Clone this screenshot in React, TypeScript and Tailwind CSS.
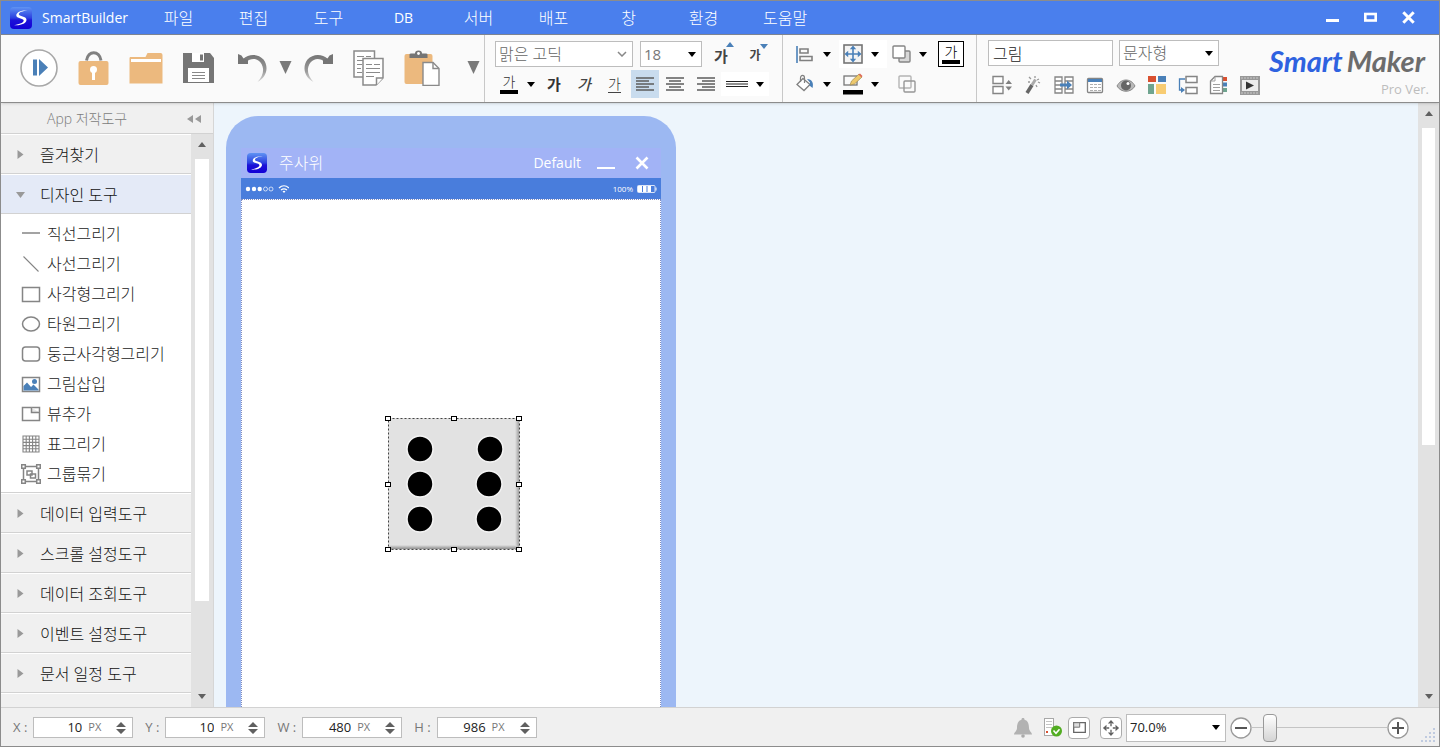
import React from 'react';
import clsx from 'clsx';

const MENUS = ['파일', '편집', '도구', 'DB', '서버', '배포', '창', '환경', '도움말'];

function SLogo({ className }: { className: string }) {
  return (
    <svg viewBox="0 0 22 22" className={className} aria-hidden="true">
      <defs>
        <linearGradient id="logoFill" x1="0" y1="0" x2="0" y2="1">
          <stop offset="0" stopColor="#5f93f3" />
          <stop offset="0.5" stopColor="#2b3fe0" />
          <stop offset="0.6" stopColor="#1c12d8" />
          <stop offset="1" stopColor="#1200d6" />
        </linearGradient>
      </defs>
      <rect width="22" height="22" rx="4" fill="url(#logoFill)" />
      <path d="M17.5 3.6C12 3 6.300 5 6.300 8.400c0 3 7.400 2.600 7.400 5.200 0 2-4 3.900-9.700 4.600 6.800.7 12.500-1.800 12.500-5.400 0-3.800-7.700-3.300-7.700-5.500 0-1.800 3.800-3.200 8.700-3.700z" fill="#fff" />
    </svg>
  );
}

function Caret({ className }: { className?: string }) {
  return (
    <svg width="8" height="5" viewBox="0 0 8 5" className={clsx('shrink-0', className)} aria-hidden="true">
      <path d="M0 0h8L4 5z" fill="currentColor" />
    </svg>
  );
}

function BigCaret() {
  return (
    <svg width="13" height="13" viewBox="0 0 13 13" className="shrink-0" aria-hidden="true">
      <path d="M0.500 0h12L6.500 13z" fill="#7a7a7a" />
    </svg>
  );
}

function ToolButton({ label, className, children }: { label: string; className?: string; children: React.ReactNode }) {
  return (
    <button type="button" aria-label={label} className={clsx('flex shrink-0 items-center justify-center', className)}>
      {children}
    </button>
  );
}

function DropButton({ label, className, children }: { label: string; className?: string; children: React.ReactNode }) {
  return (
    <button type="button" aria-label={label} className={clsx('flex h-7 w-12 shrink-0 items-center gap-2 pl-1', className)}>
      {children}
      <Caret className="text-black" />
    </button>
  );
}

function SelectBox({ label, value, width, height, text, thin }: { label: string; value: string; width: string; height: string; text: string; thin?: boolean }) {
  return (
    <div className={clsx('relative shrink-0', width, height)}>
      <select aria-label={label} className={clsx('size-full appearance-none border border-[#bdbdbd] bg-white pl-[3px] outline-none', text)}>
        <option>{value}</option>
      </select>
      {thin ? (
        <svg width="10" height="6" viewBox="0 0 10 6" className="pointer-events-none absolute top-2.5 right-1.5" aria-hidden="true">
          <path d="M1 1l4 4 4-4" fill="none" stroke="#888" strokeWidth="1.500" />
        </svg>
      ) : (
        <Caret className="pointer-events-none absolute inset-y-0 right-1.5 my-auto text-black" />
      )}
    </div>
  );
}

function TitleBar() {
  return (
    <header className="flex h-[34px] shrink-0 items-center border-b border-[#7f8794] bg-[#4a7fed] pl-[9px] text-white">
      <SLogo className="size-[22px]" />
      <h1 className="ml-2.5 w-[99px] text-sm font-normal">SmartBuilder</h1>
      <nav className="flex flex-1">
        {MENUS.map((m) => (
          <button key={m} type="button" className={clsx('min-w-[75px] px-[22px] whitespace-nowrap', m === 'DB' ? 'text-sm font-normal' : 'text-base')}>{m}</button>
        ))}
      </nav>
      <div className="mr-6 flex items-center gap-[25px]">
        <ToolButton label="최소화">
          <svg width="13" height="14" viewBox="0 0 13 14"><path d="M0 9.500h13" stroke="#fff" strokeWidth="3" /></svg>
        </ToolButton>
        <ToolButton label="최대화">
          <svg width="13" height="14" viewBox="0 0 13 14"><rect x="1.300" y="3" width="10.400" height="6.500" fill="none" stroke="#fff" strokeWidth="2.600" /></svg>
        </ToolButton>
        <ToolButton label="닫기">
          <svg width="13" height="13" viewBox="0 0 13 13"><path d="M1.300 1.300l10.400 10.400M11.700 1.300L1.300 11.700" stroke="#fff" strokeWidth="3" /></svg>
        </ToolButton>
      </div>
    </header>
  );
}

function UndoArrow({ flip }: { flip?: boolean }) {
  const id = flip ? 'redoFade' : 'undoFade';
  return (
    <svg width="30" height="30" viewBox="0 0 30 30" aria-hidden="true">
      <defs>
        <linearGradient id={id} x1="0" y1="0" x2="0" y2="1">
          <stop offset="0" stopColor="#757575" />
          <stop offset="0.600" stopColor="#9a9a9a" />
          <stop offset="1" stopColor="#d8d8d8" />
        </linearGradient>
      </defs>
      <g transform={flip ? 'translate(30 0) scale(-1 1)' : undefined}>
        <path d="M5 6C11 .500 20 .500 25.500 6.500 31 13.500 29 24 19.500 29 25.500 23 27 15.500 22.500 9.500 18.500 4.500 12.500 5 8 9z" fill={`url(#${id})`} />
        <path d="M0 1l3.500 1.500 2 3 4.500 1V11H0z" fill="#757575" />
      </g>
    </svg>
  );
}

function FileGroup() {
  return (
    <div className="flex w-[484px] shrink-0 items-center gap-5 border-r border-[#c8c8c8] pr-1 pb-0.5 pl-[19px]">
      <ToolButton label="실행">
        <svg width="38" height="38" viewBox="0 0 38 38">
          <circle cx="19" cy="19" r="18" fill="#fff" stroke="#a8a8a8" strokeWidth="1.600" />
          <path d="M13 10.500h4v16h-4zM19 10l9 8.500-9 8.500z" fill="#4a80b8" />
        </svg>
      </ToolButton>
      <ToolButton label="잠금">
        <svg width="31" height="34" viewBox="0 0 31 34">
          <path d="M8.500 9.500c1.500-10.500 13-10.500 14.500 0" fill="none" stroke="#808080" strokeWidth="3" />
          <rect x="0.500" y="10" width="30" height="24" rx="2" fill="#ecb97e" />
          <circle cx="15.500" cy="18.500" r="3.500" fill="#fff" />
          <path d="M14 20h3v9h-3z" fill="#fff" />
        </svg>
      </ToolButton>
      <ToolButton label="열기">
        <svg width="34" height="32" viewBox="0 0 34 32">
          <path d="M1 5h15.500l2-4h13q2 0 2 2v28.500H.500V6z" fill="#ecb97e" />
          <path d="M2 7h30v3H2z" fill="#fff" />
        </svg>
      </ToolButton>
      <ToolButton label="저장">
        <svg width="31" height="30" viewBox="0 0 31 30">
          <path d="M0 0h27l4 5v25H0z" fill="#757575" />
          <path d="M9 0h12v9H9zM5 15h21v14H5z" fill="#fff" />
          <path d="M17 1.500h3v6h-3z" fill="#757575" />
          <path d="M9 19.500h13M9 22.500h13M9 25.500h13" stroke="#888" />
        </svg>
      </ToolButton>
      <div className="ml-1 flex items-center gap-[11px]">
        <ToolButton label="실행 취소"><UndoArrow /></ToolButton>
        <ToolButton label="취소 목록"><BigCaret /></ToolButton>
        <ToolButton label="다시 실행"><UndoArrow flip /></ToolButton>
      </div>
      <ToolButton label="복사">
        <svg width="31" height="36" viewBox="0 0 31 36" stroke="#8a8a8a" fill="#fff">
          <path d="M1 1h20.500v26H1z" strokeWidth="1.500" />
          <path d="M4 6.500h7M4 10.500h6M4 14.500h5M4 18.500h4M4 22.500h5M13 6.500h5" />
          <path d="M10 8.500h20V28l-7 7H10z" strokeWidth="1.500" />
          <path d="M30 28h-6.500v7" strokeWidth="1.500" />
          <path d="M13 14.500h6M13 18.500h14M13 22.500h14M13 26.500h8M21 14.500h6" />
        </svg>
      </ToolButton>
      <ToolButton label="붙여넣기">
        <svg width="36" height="36" viewBox="0 0 36 36">
          <rect x="0.500" y="4" width="28" height="30" rx="2" fill="#ecb97e" />
          <path d="M5.500 8V4.500Q5.500 3.500 7 3.500h4Q11 .500 14.500.500T18 3.500h4q1.500 0 1.500 1V8z" fill="#757575" />
          <circle cx="14.500" cy="3.500" r="1.400" fill="#fff" />
          <path d="M19 12.500h10l6 6v17H19z" fill="#fff" stroke="#8a8a8a" strokeWidth="1.400" />
          <path d="M29 12.500v6h6" fill="none" stroke="#8a8a8a" strokeWidth="1.400" />
        </svg>
      </ToolButton>
      <ToolButton label="더보기" className="ml-auto"><BigCaret /></ToolButton>
    </div>
  );
}

const ALIGN_LINES: Record<string, string> = {
  left: 'M0 1h18M0 4h13M0 7h18M0 10h13M0 13h18',
  center: 'M0 1h18M3 4h12M0 7h18M3 10h12M0 13h18',
  right: 'M0 1h18M5 4h13M0 7h18M5 10h13M0 13h18',
};

function AlignIcon({ kind }: { kind: string }) {
  return (
    <svg width="18" height="14" viewBox="0 0 18 14" aria-hidden="true">
      <path d={ALIGN_LINES[kind]} stroke="#5c5c5c" strokeWidth="1.600" />
    </svg>
  );
}

function FontGroup() {
  return (
    <div className="flex w-[298px] shrink-0 flex-col gap-0.5 border-r border-[#c8c8c8] pt-[5px] pl-2.5">
      <div className="flex items-center">
        <SelectBox label="글꼴" value="맑은 고딕" width="w-[138px]" height="h-[26px]" text="text-base text-[#666]" thin />
        <div className="w-[7px]" />
        <SelectBox label="글자 크기" value="18" width="w-[62px]" height="h-[26px]" text="text-[15px] font-normal text-[#777]" />
        <ToolButton label="글자 크게" className="relative ml-1 h-7 w-[30px] pt-1 text-[15px] font-bold text-[#444]">
          가
          <Caret className="absolute top-0.5 right-0.5 rotate-180 text-[#4a80b8]" />
        </ToolButton>
        <ToolButton label="글자 작게" className="relative ml-1 h-7 w-[30px] pt-1 text-xs font-bold text-[#444]">
          가
          <Caret className="absolute top-1 right-0.5 text-[#4a80b8]" />
        </ToolButton>
      </div>
      <div className="flex items-center">
        <DropButton label="글자색" className="mr-[-4px]">
          <span className="flex w-5 flex-col items-center text-[14px] leading-4 text-[#333]">
            가
            <span className="h-1 w-[18px] bg-black" />
          </span>
        </DropButton>
        <ToolButton label="굵게" className="h-7 w-[30px] text-[15px] font-bold text-[#333]">가</ToolButton>
        <ToolButton label="기울임" className="h-7 w-[30px] text-[15px] font-medium text-[#444] italic">가</ToolButton>
        <ToolButton label="밑줄" className="mr-px h-7 w-[31px] text-[#333]">
          <span className="border-b border-[#444] text-[14px] leading-4">가</span>
        </ToolButton>
        <ToolButton label="왼쪽 맞춤" className="h-7 w-7 bg-[#c9dcee]"><AlignIcon kind="left" /></ToolButton>
        <ToolButton label="가운데 맞춤" className="h-7 w-[31px]"><AlignIcon kind="center" /></ToolButton>
        <ToolButton label="오른쪽 맞춤" className="h-7 w-[31px]"><AlignIcon kind="right" /></ToolButton>
        <ToolButton label="선 종류" className="h-6 w-12 gap-2 bg-white">
          <svg width="22" height="6" viewBox="0 0 22 6"><path d="M0 .500h22M0 3h22M0 5.500h22" stroke="#222" /></svg>
          <Caret className="text-black" />
        </ToolButton>
      </div>
    </div>
  );
}

function FitArrows({ color }: { color: string }) {
  return (
    <>
      <path d="M10 5v10M5 10h10" stroke={color} strokeWidth="1.600" />
      <path d="M10 1.500l3.200 3.700H6.800zM10 18.500l3.200-3.700H6.800zM1.500 10l3.700-3.200v6.400zM18.500 10l-3.700-3.200v6.400z" fill={color} />
    </>
  );
}

function ShapeGroup() {
  return (
    <div className="flex w-[194px] shrink-0 flex-col gap-0.5 border-r border-[#c8c8c8] pt-[5px] pl-2">
      <div className="flex items-center">
        <DropButton label="정렬">
          <svg width="20" height="20" viewBox="0 0 20 20" fill="none" stroke="#808080" strokeWidth="1.600">
            <path d="M2 2v17" stroke="#4a80b8" />
            <path d="M5 5h8v4H5zM5 12.500h12v4H5z" />
          </svg>
        </DropButton>
        <DropButton label="크기 맞춤" className="bg-white">
          <svg width="20" height="20" viewBox="0 0 20 20">
            <rect x="1" y="1" width="18" height="18" fill="#f4f4f4" stroke="#757575" strokeWidth="1.600" />
            <FitArrows color="#4a80b8" />
          </svg>
        </DropButton>
        <DropButton label="순서">
          <svg width="20" height="20" viewBox="0 0 20 20" stroke="#858585" strokeWidth="1.400">
            <rect x="8" y="7" width="11" height="11" rx="1" fill="#d8d8d8" />
            <rect x="2" y="2" width="12" height="12" rx="1" fill="#fff" />
          </svg>
        </DropButton>
        <ToolButton label="배경색" className="ml-[3px] size-[26px] flex-col border border-black bg-white text-[14px] leading-4">
          가
          <span className="h-1 w-[18px] bg-black" />
        </ToolButton>
      </div>
      <div className="flex items-center">
        <DropButton label="채우기">
          <svg width="20" height="20" viewBox="0 0 20 20">
            <path d="M8 4.500l7 6-6 6-7-6z" fill="#fff" stroke="#808080" strokeWidth="1.300" />
            <path d="M5.500 8V4c0-3.500 4-3.500 4 0v5" fill="none" stroke="#808080" strokeWidth="1.200" />
            <path d="M12 5c5 0 7 4 5.500 9l-3-2.500.500-3z" fill="#4a80b8" />
          </svg>
        </DropButton>
        <DropButton label="선 색">
          <svg width="20" height="22" viewBox="0 0 20 22">
            <rect x="1" y="3" width="13" height="9" fill="none" stroke="#777" strokeWidth="1.300" />
            <path d="M7 12l1.500-4L16 1l3 3-7.500 7z" fill="#eec96c" stroke="#a08a50" strokeWidth="0.700" />
            <path d="M15.500 1.500L17 .500 19.500 3 18.500 4.500z" fill="#dc6a58" />
            <path d="M0 17h20v4.500H0z" fill="#000" />
          </svg>
        </DropButton>
        <ToolButton label="그룹" className="h-7 w-10">
          <svg width="20" height="20" viewBox="0 0 20 20" fill="none" stroke="#b4b4b4" strokeWidth="1.400">
            <rect x="2" y="2" width="12" height="12" rx="1" />
            <rect x="7" y="7" width="11" height="11" rx="1" stroke="#969696" />
          </svg>
        </ToolButton>
      </div>
    </div>
  );
}

const OBJECT_TOOLS: { label: string; art: React.ReactNode }[] = [
  {
    label: '배치',
    art: (
      <>
        <path d="M1 1.500h10v7H1zM1 11.500h10v7H1z" fill="#fff" stroke="#858585" strokeWidth="1.400" />
        <path d="M13.500 9l3.200-4L20 9zM13.500 11.500l3.200 4 3.300-4z" fill="#808080" />
      </>
    ),
  },
  {
    label: '마법봉',
    art: (
      <>
        <path d="M4 18l5-8" stroke="#666" strokeWidth="3.500" />
        <path d="M9 10l3.500-5.500" stroke="#aaa" strokeWidth="3" />
        <path d="M6 2l2 2M12 1v2M16 4l-2 1M17 8l-2-1M14 12l-1-2M5 7l2 0" stroke="#999" strokeWidth="1.300" />
      </>
    ),
  },
  {
    label: '데이터 연결',
    art: (
      <>
        <path d="M1 2h7v16H1zM11 2h8v16h-8zM1 6h7M1 10h7M1 14h7M11 6h8M11 14h8" fill="#fff" stroke="#858585" strokeWidth="1.300" />
        <path d="M6 8.500h7V5.500l5 4.500-5 4.500v-3H6z" fill="#4a80b8" />
      </>
    ),
  },
  {
    label: '표',
    art: (
      <>
        <rect x="2.500" y="3.500" width="15" height="14" rx="1" fill="#fff" stroke="#858585" strokeWidth="1.300" />
        <path d="M3 4h14v3H3z" fill="#4a80b8" />
        <path d="M5 9.500h3M5 12.500h3M5 15.500h3M9 9.500h3M9 12.500h3M9 15.500h3M13 9.500h3M13 12.500h3M13 15.500h3" stroke="#b0b0b0" />
      </>
    ),
  },
  {
    label: '보기',
    art: (
      <>
        <path d="M1 11c4-8 14-8 18 0-4 7-14 7-18 0z" fill="#b9b9b9" stroke="#888" />
        <circle cx="10" cy="10.500" r="5" fill="#666" />
        <circle cx="12" cy="8.500" r="1.500" fill="#fff" />
      </>
    ),
  },
  {
    label: '색상',
    art: (
      <>
        <path d="M1 1h8v6H1z" fill="#d95030" />
        <path d="M11 1h8v6h-8z" fill="#4a80b8" />
        <path d="M1 9h6v10H1z" fill="#6fa48f" />
        <path d="M9 9h10v10H9z" fill="#f8cc72" />
      </>
    ),
  },
  {
    label: '흐름',
    art: (
      <>
        <path d="M8 1.500h11v6H8zM8 12.500h11v6H8z" fill="#fff" stroke="#858585" strokeWidth="1.500" />
        <path d="M7 4H1.500v11H5" fill="none" stroke="#4a80b8" strokeWidth="1.300" />
        <path d="M3 12l4 3-4 3z" fill="#4a80b8" />
      </>
    ),
  },
  {
    label: '문서',
    art: (
      <>
        <path d="M14 2h4v4h-4z" fill="#d95030" />
        <path d="M14 7.500h4v4h-4z" fill="#4a80b8" />
        <path d="M14 13h4v4h-4z" fill="#6fa48f" />
        <path d="M6 1.500h7.500v17H1.500V6z" fill="#fff" stroke="#858585" strokeWidth="1.300" />
        <path d="M6 1.500V6H1.500M4 9.500h7M4 12.500h7M4 15.500h7" fill="none" stroke="#a0a0a0" />
      </>
    ),
  },
  {
    label: '미리보기',
    art: (
      <>
        <rect x="0" y="1" width="20" height="19" fill="#989898" />
        <rect x="2" y="5" width="16" height="11" fill="#ececec" />
        <path d="M6 6.500l8 4-8 4z" fill="#333" />
        <path d="M1 3h18M1 18h18" stroke="#c8c8c8" strokeDasharray="2 1" />
      </>
    ),
  },
];

function ObjectGroup() {
  return (
    <div className="flex min-w-0 flex-1 justify-between">
      <div className="flex flex-col gap-[5px] pt-[5px] pl-[9px]">
        <div className="flex items-center gap-1.5 pl-0.5">
          <input aria-label="이름" defaultValue="그림" className="h-[26px] w-[125px] border border-[#bdbdbd] bg-white px-1 text-base text-[#222] outline-none" />
          <SelectBox label="형식" value="문자형" width="w-[100px]" height="h-[26px]" text="text-base text-[#666]" />
        </div>
        <div className="flex">
          {OBJECT_TOOLS.map((t) => (
            <ToolButton key={t.label} label={t.label} className="h-7 w-[31px]">
              <svg width="20" height="20" viewBox="0 0 20 20">{t.art}</svg>
            </ToolButton>
          ))}
        </div>
      </div>
      <div className="mr-2.5 flex flex-col items-end pt-1.5">
        <p className="flex items-baseline gap-1 pr-1 font-['Lato',sans-serif] text-[29px] leading-10 font-bold italic">
          <span className="text-[#2e62e0]">Smart</span>
          <span className="text-[#6c6c6c]">Maker</span>
        </p>
        <p className="text-[13px] leading-4 font-normal text-[#bdbdbd]">Pro Ver.</p>
      </div>
    </div>
  );
}

const DESIGN_TOOLS: { name: string; art: React.ReactNode }[] = [
  { name: '직선그리기', art: <path d="M1 9h18" /> },
  { name: '사선그리기', art: <path d="M2.500 2.500l15 15" strokeWidth="1.100" /> },
  { name: '사각형그리기', art: <rect x="1.500" y="3.500" width="17" height="14" /> },
  { name: '타원그리기', art: <ellipse cx="10" cy="10" rx="8.500" ry="7" /> },
  { name: '둥근사각형그리기', art: <rect x="1.500" y="3" width="17" height="14" rx="3" /> },
  {
    name: '그림삽입',
    art: (
      <>
        <rect x="1.500" y="3.500" width="17" height="14" />
        <path d="M2.500 16.500V12L6 8.500l4 4.500 2.500-2.500 5 5v1z" fill="#4a80b8" stroke="none" />
        <circle cx="13.500" cy="7.500" r="2.500" fill="#4a80b8" stroke="none" />
      </>
    ),
  },
  {
    name: '뷰추가',
    art: (
      <>
        <rect x="1.500" y="3.500" width="17" height="13" />
        <path d="M10.500 3.500v5h8" fill="#e8e8e8" />
      </>
    ),
  },
  {
    name: '표그리기',
    art: <path d="M2 2h16v16H2zM5.200 2v16M8.400 2v16M11.600 2v16M14.800 2v16M2 5.200h16M2 8.400h16M2 11.600h16M2 14.800h16" strokeWidth="1.100" />,
  },
  {
    name: '그룹묶기',
    art: (
      <>
        <path d="M2.500 2.500h15v15h-15z" />
        <path d="M.700.700h3.600v3.600H.700zM15.700.700h3.600v3.600h-3.600zM.700 15.700h3.600v3.600H.700zM15.700 15.700h3.600v3.600h-3.600z" fill="#fff" />
        <path d="M6 7h5v4H6zM9.500 10h5v4h-5z" />
      </>
    ),
  },
];

const SECTIONS = ['데이터 입력도구', '스크롤 설정도구', '데이터 조회도구', '이벤트 설정도구', '문서 일정 도구'];

function SectionHeader({ title, open }: { title: string; open?: boolean }) {
  return (
    <button
      type="button"
      className={clsx(
        'flex h-10 w-full shrink-0 items-center border-t border-b border-t-white border-b-[#d2d2d2] pt-px pl-[15px] text-base text-[#111]',
        open ? 'bg-[#e4eaf7]' : 'bg-[#f0f0f0]'
      )}
    >
      <svg width="9" height="9" viewBox="0 0 9 9" className="mr-[15px]" aria-hidden="true">
        <path d={open ? 'M0 2h9L4.500 8z' : 'M1.500 0L7.500 4.500l-6 4.500z'} fill="#999" />
      </svg>
      {title}
    </button>
  );
}

function ScrollBar({ className, thumb }: { className: string; thumb: string }) {
  return (
    <div className={clsx('flex shrink-0 flex-col items-center bg-[#e2e2e2] text-[#606060]', className)}>
      <div className="flex h-[25px] shrink-0 items-center pb-1"><Caret className="rotate-180" /></div>
      <div className="min-h-0 w-full flex-1 px-1">
        <div className={clsx('bg-white', thumb)} />
      </div>
      <div className="flex h-[22px] shrink-0 items-center"><Caret /></div>
    </div>
  );
}

function SideBar() {
  return (
    <aside className="flex w-[213px] shrink-0 flex-col border-r border-[#d6d6d6] bg-[#f0f0f0]">
      <div className="flex h-[31px] shrink-0 items-center justify-between border-b border-[#d2d2d2] pt-px pr-3 pl-[46px] text-sm text-[#7c7c7c]">
        App 저작도구
        <button type="button" aria-label="접기">
          <svg width="14" height="8" viewBox="0 0 14 8"><path d="M6 0v8L0 4zM14 0v8L8 4z" fill="#999" /></svg>
        </button>
      </div>
      <div className="flex min-h-0 flex-1">
        <div className="flex min-w-0 flex-1 flex-col overflow-hidden">
          <SectionHeader title="즐겨찾기" />
          <SectionHeader title="디자인 도구" open />
          <ul className="shrink-0 border-b border-[#d2d2d2] bg-white py-1">
            {DESIGN_TOOLS.map((t) => (
              <li key={t.name}>
                <button type="button" className="flex h-[30px] w-full items-center gap-1.5 pt-px pl-5 text-base text-[#222]">
                  <svg width="20" height="20" viewBox="0 0 20 20" fill="none" stroke="#858585" strokeWidth="1.500" aria-hidden="true">{t.art}</svg>
                  {t.name}
                </button>
              </li>
            ))}
          </ul>
          {SECTIONS.map((s) => (
            <SectionHeader key={s} title={s} />
          ))}
          <div className="border-t border-white" />
        </div>
        <ScrollBar className="w-[22px]" thumb="h-[84%] w-[14px]" />
      </div>
    </aside>
  );
}

const DOTS = [
  [32, 31], [102, 31], [32, 66], [101, 66], [32, 101], [101, 101],
];
const HANDLES = [
  [0, 0], [66, 0], [131, 0], [0, 66], [131, 66], [0, 131], [66, 131], [131, 131],
];

function Dice() {
  return (
    <svg width="140" height="140" viewBox="-4 -4 140 140" className="absolute top-[214px] left-[142px]" role="img" aria-label="주사위">
      <defs>
        <linearGradient id="diceRight">
          <stop offset="0" stopColor="#e2e2e2" />
          <stop offset="1" stopColor="#a0a0a0" />
        </linearGradient>
        <linearGradient id="diceBottom" x1="0" y1="0" x2="0" y2="1">
          <stop offset="0" stopColor="#e2e2e2" />
          <stop offset="1" stopColor="#8c8c8c" />
        </linearGradient>
      </defs>
      <rect width="132" height="132" fill="#e2e2e2" />
      <path d="M127 3l4-3v132l-4-5z" fill="url(#diceRight)" />
      <path d="M2 127h126l3 4H0z" fill="url(#diceBottom)" />
      <rect x="0.500" y="0.500" width="131" height="131" fill="none" stroke="#444" strokeDasharray="2 2" />
      {DOTS.map(([x, y]) => (
        <circle key={`${x}-${y}`} cx={x} cy={y} r="13" fill="#000" stroke="#f4f4f4" strokeWidth="1.500" />
      ))}
      {HANDLES.map(([x, y]) => (
        <rect key={`${x}-${y}`} x={x - 2.500} y={y - 1.500} width="5" height="4" fill="#fff" stroke="#000" />
      ))}
    </svg>
  );
}

function Phone() {
  return (
    <div className="mt-[13px] ml-3 flex w-[450px] flex-col rounded-t-[32px] bg-[#9cb8f2] px-[15px] pt-8">
      <div className="flex h-[30px] shrink-0 items-center bg-[#a2b3f6] pr-3 pl-1.5 text-white">
        <SLogo className="size-5" />
        <span className="ml-3 flex-1 text-base">주사위</span>
        <span className="text-sm font-normal">Default</span>
        <button type="button" aria-label="최소화" className="ml-4">
          <svg width="18" height="14" viewBox="0 0 18 14"><path d="M0 12h18" stroke="#fff" strokeWidth="2" /></svg>
        </button>
        <button type="button" aria-label="닫기" className="ml-5">
          <svg width="14" height="14" viewBox="0 0 14 14"><path d="M1.500 1.500l11 11M12.500 1.500l-11 11" stroke="#fff" strokeWidth="2.600" /></svg>
        </button>
      </div>
      <div className="flex h-[21px] shrink-0 items-center bg-[#497ddc] px-1 text-white">
        <svg width="44" height="10" viewBox="0 0 44 10" aria-hidden="true">
          <path d="M3 2.800a2.200 2.200 0 100 4.400 2.200 2.200 0 000-4.400zM9 2.800a2.200 2.200 0 100 4.400 2.200 2.200 0 000-4.400zM14.700 2.800a2.200 2.200 0 100 4.400 2.200 2.200 0 000-4.400z" fill="#fff" />
          <circle cx="20.500" cy="5" r="2" fill="none" stroke="#fff" strokeWidth="0.700" />
          <circle cx="26" cy="5" r="2" fill="none" stroke="#fff" strokeWidth="0.700" />
          <path d="M34 4c3-2.800 7-2.800 10 0M36 6c2-1.600 4-1.600 6 0" fill="none" stroke="#fff" strokeWidth="1.300" />
          <path d="M37.500 7.200q1.500-1 3 0L39 9z" fill="#fff" />
        </svg>
        <span className="mr-1 ml-auto text-[8px] font-normal">100%</span>
        <svg width="20" height="8" viewBox="0 0 20 8" aria-hidden="true">
          <rect x="0.500" y="0.500" width="17.500" height="7" rx="1" fill="none" stroke="#fff" strokeWidth="0.800" />
          <path d="M1 1h4v6H1zM6 1h3.500v6H6zM10.500 1H14v6h-3.500zM18.500 2.500h1v3h-1z" fill="#fff" />
        </svg>
      </div>
      <div className="relative flex-1 border border-b-0 border-dotted border-[#7f8cc0] bg-white">
        <Dice />
      </div>
    </div>
  );
}

const FIELDS = [
  { id: 'X', value: '10' },
  { id: 'Y', value: '10' },
  { id: 'W', value: '480' },
  { id: 'H', value: '986' },
];

function StatusBar() {
  return (
    <footer className="flex h-[39px] shrink-0 items-center border-t border-[#d2d2d2] bg-[#f0f0f0] pt-px pr-1 pl-3 font-normal">
      <div className="flex flex-1 items-center gap-3">
        {FIELDS.map((f) => (
          <div key={f.id} className="flex items-center gap-1.5 text-[13px] text-[#777]">
            <label htmlFor={`field-${f.id}`}>{f.id} :</label>
            <div className="flex h-[21px] w-[100px] items-center border border-[#bdbdbd] bg-white pr-[5px]">
              <input id={`field-${f.id}`} defaultValue={f.value} className="w-12 bg-transparent text-right text-[13px] text-[#222] outline-none" />
              <span className="ml-1.5 flex-1 text-[11px]">PX</span>
              <button type="button" aria-label={`${f.id} 조절`}>
                <svg width="12" height="12" viewBox="0 0 12 12"><path d="M1 5L6 0l5 5zM1 7l5 5 5-5z" fill="#606060" /></svg>
              </button>
            </div>
          </div>
        ))}
      </div>
      <div className="flex items-center">
        <ToolButton label="알림">
          <svg width="18" height="20" viewBox="0 0 18 20">
            <circle cx="9" cy="18" r="1.800" fill="#aaa" />
            <path d="M9 0c1.200 0 1.500.700 1.500 1.700C14 2.500 15 6 15 10c0 3 3 4.500 3 6.500H0C0 14.500 3 13 3 10c0-4 1-7.500 4.500-8.300C7.500.700 7.800 0 9 0z" fill="#b2b2b2" />
          </svg>
        </ToolButton>
        <ToolButton label="서버 상태" className="mr-1.5 ml-3">
          <svg width="18" height="19" viewBox="0 0 18 19">
            <rect x="0.500" y="0.500" width="9" height="17" fill="#fff" stroke="#a8a8a8" />
            <path d="M2 3.500h6M2 6.500h6M2 9.500h6" stroke="#c4c4c4" />
            <path d="M2 13h2v2H2z" fill="#d95030" />
            <circle cx="12.500" cy="13" r="5.500" fill="#52ad22" />
            <path d="M9.500 12.500l2.500 2.700 3.500-4" fill="none" stroke="#fff" strokeWidth="1.600" />
          </svg>
        </ToolButton>
        <ToolButton label="창 보기" className="size-[22px] rounded-sm border border-[#ababab] bg-white">
          <svg width="13" height="11" viewBox="0 0 13 11"><path d="M.700.700h11.600v9.600H.700z" fill="#fff" stroke="#666" strokeWidth="1.300" /><path d="M.700.700h6v4.500h-6z" fill="#ddd" stroke="#777" /></svg>
        </ToolButton>
        <ToolButton label="화면 맞춤" className="mr-1 ml-2.5 size-[22px] rounded-sm border border-[#ababab] bg-white">
          <svg width="18" height="18" viewBox="0 0 20 20">
            <path d="M10 1l3.500 4h-7zM10 19l3.500-4h-7zM1 10l4-3.500v7zM19 10l-4-3.500v7z" fill="#606060" />
            <path d="M10 5v3M10 12v3M5 10h3M12 10h3" stroke="#606060" strokeWidth="1.500" />
          </svg>
        </ToolButton>
        <SelectBox label="배율" value="70.0%" width="w-[100px]" height="h-7" text="text-[13px] text-[#222]" />
        <ToolButton label="축소" className="ml-1">
          <svg width="22" height="22" viewBox="0 0 22 22"><circle cx="11" cy="11" r="10" fill="#fff" stroke="#999" strokeWidth="1.300" /><path d="M5 11h12" stroke="#555" strokeWidth="2" /></svg>
        </ToolButton>
        <input
          type="range"
          aria-label="확대 비율"
          min="0"
          max="100"
          defaultValue="9"
          className="h-7 w-[135px] appearance-none bg-transparent [&::-webkit-slider-runnable-track]:h-px [&::-webkit-slider-runnable-track]:bg-[#c4c4c4] [&::-webkit-slider-thumb]:-mt-[13px] [&::-webkit-slider-thumb]:h-7 [&::-webkit-slider-thumb]:w-[14px] [&::-webkit-slider-thumb]:appearance-none [&::-webkit-slider-thumb]:rounded-sm [&::-webkit-slider-thumb]:border [&::-webkit-slider-thumb]:border-[#999] [&::-webkit-slider-thumb]:bg-linear-to-b [&::-webkit-slider-thumb]:from-white [&::-webkit-slider-thumb]:to-[#d4d4d4]"
        />
        <ToolButton label="확대">
          <svg width="22" height="22" viewBox="0 0 22 22"><circle cx="11" cy="11" r="10" fill="#fff" stroke="#999" strokeWidth="1.300" /><path d="M5 11h12M11 5v12" stroke="#555" strokeWidth="2" /></svg>
        </ToolButton>
        <svg width="14" height="14" viewBox="0 0 14 14" className="ml-3 self-end" aria-hidden="true">
          <path d="M12 0h2v2h-2zM12 4h2v2h-2zM12 8h2v2h-2zM12 12h2v2h-2zM8 4h2v2H8zM8 8h2v2H8zM8 12h2v2H8zM4 8h2v2H4zM4 12h2v2H4zM0 12h2v2H0z" fill="#c0cbe0" />
        </svg>
      </div>
    </footer>
  );
}

export default function App() {
  return (
    <div className="flex h-screen flex-col overflow-hidden border border-[#8c8c8c] bg-[#f0f0f0] font-['Open_Sans','Noto_Sans_CJK_KR',sans-serif] font-light">
      <TitleBar />
      <div className="z-10 flex h-[68px] shrink-0 border-b border-[#8c8c8c] bg-[#fafafa] shadow-sm">
        <FileGroup />
        <FontGroup />
        <ShapeGroup />
        <ObjectGroup />
      </div>
      <div className="flex min-h-0 flex-1">
        <SideBar />
        <main className="flex min-w-0 flex-1 bg-[#edf5fc]">
          <Phone />
        </main>
        <ScrollBar className="w-[21px]" thumb="h-[57%] w-[13px]" />
      </div>
      <StatusBar />
    </div>
  );
}
